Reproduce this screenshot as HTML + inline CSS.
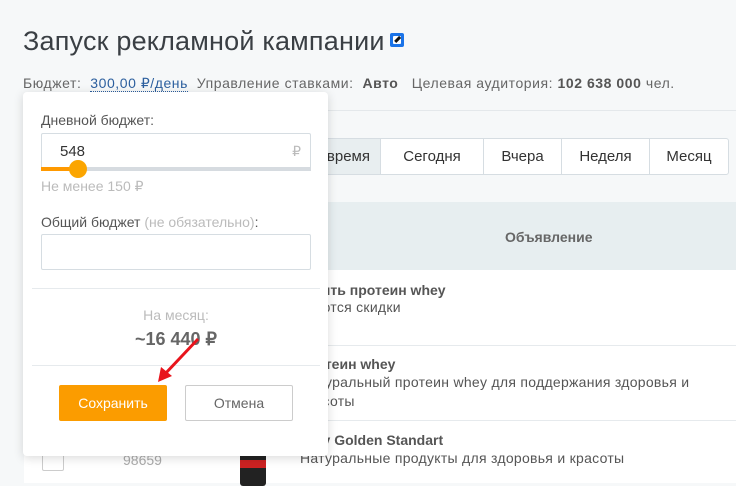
<!DOCTYPE html>
<html><head><meta charset="utf-8"><style>
*{box-sizing:border-box;margin:0;padding:0}
body{width:736px;height:483px;overflow:hidden;background:#f6f8f9;font-family:"Liberation Sans",sans-serif;color:#555;position:relative}
.a{position:absolute}
h1{position:absolute;left:23px;top:26px;font-size:27px;font-weight:normal;color:#3a3f44;letter-spacing:0.2px}
.meta{position:absolute;left:23px;top:75px;font-size:14px;color:#666;white-space:nowrap;letter-spacing:0.55px}
.meta b{color:#555}
.link{color:#2c5f9e;border-bottom:1px dotted #2c5f9e}
.tab{position:absolute;top:138px;height:37px;border:1px solid #d6dde2;background:#fff;font-size:15px;color:#333;text-align:center;line-height:36px}
.row{position:absolute;left:24px;width:712px;background:#fff;border-top:1px solid #e6eaed}
.t1{position:absolute;left:276px;font-size:14px;font-weight:bold;color:#555;white-space:nowrap}
.t2{position:absolute;left:276px;font-size:14px;color:#555;line-height:19px;letter-spacing:0.28px;white-space:nowrap}
.pop{position:absolute;left:23px;top:92px;width:305px;height:364px;background:#fff;border-radius:4px;box-shadow:0 2px 10px rgba(0,0,0,.15)}
.lbl{position:absolute;left:18px;font-size:14px;color:#555}
.inp{position:absolute;left:18px;width:270px;height:36px;border:1px solid #d6dde2;border-radius:2px;background:#fff}
</style></head><body>
<h1>Запуск рекламной кампании</h1>
<div class="a" style="left:390px;top:33px;width:14px;height:14px;background:#1a73e8;border-radius:2px"><div class="a" style="left:3px;top:3px;width:8px;height:8px;background:#fff;border-radius:1px"></div><div class="a" style="left:4px;top:5px;width:7px;height:2.5px;background:#111;transform:rotate(-45deg)"></div></div>
<div class="meta">Бюджет:&nbsp; <span class="link">300,00 ₽/день</span> &nbsp;Управление ставками:&nbsp; <b>Авто</b> &nbsp;&nbsp;Целевая аудитория: <b>102 638 000</b> чел.</div>
<div class="a" style="left:23px;top:110px;width:713px;height:1px;background:#e4e8eb"></div>
<div class="tab" style="left:300px;width:81px;background:#e8eef0;text-align:right;padding-right:10px">время</div>
<div class="tab" style="left:380px;width:104px">Сегодня</div>
<div class="tab" style="left:483px;width:79px">Вчера</div>
<div class="tab" style="left:561px;width:89px">Неделя</div>
<div class="tab" style="left:649px;width:80px;border-radius:0 3px 3px 0">Месяц</div>
<div class="a" style="left:24px;top:202px;width:712px;height:68px;background:#e7eef0"></div>
<div class="a" style="left:505px;top:229px;font-size:14px;font-weight:bold;color:#666">Объявление</div>
<div class="row" style="top:270px;height:75px;border-top:none"><div class="t1" style="top:12px;left:273px">Купить протеин whey</div><div class="t2" style="top:28px;left:278px">Даются скидки</div></div>
<div class="row" style="top:345px;height:75px"><div class="t1" style="top:10px;left:274px">Протеин whey</div><div class="t2" style="top:27px">Натуральный протеин whey для поддержания здоровья и<br>красоты</div></div>
<div class="row" style="top:420px;height:63px"><div class="t1" style="top:11px;left:269px">Whey Golden Standart</div><div class="t2" style="top:28px">Натуральные продукты для здоровья и красоты</div>
<div class="a" style="left:18px;top:28px;width:22px;height:22px;border:1px solid #ccc;border-radius:2px"></div>
<div class="a" style="left:99px;top:31px;font-size:14px;color:#aaa">98659</div>
<div class="a" style="left:216px;top:25px;width:26px;height:40px;background:linear-gradient(#222 0 35%,#c22 35% 55%,#222 55%);border-radius:3px"></div></div>
<div class="pop">
<div class="lbl" style="top:20px">Дневной бюджет:</div>
<div class="inp" style="top:41px"><span class="a" style="left:18px;top:9px;font-size:15px;color:#333">548</span><span class="a" style="right:9px;top:9px;font-size:14px;color:#bbb">₽</span></div>
<div class="a" style="left:18px;top:75px;width:270px;height:4px;background:#d6dbe0"></div>
<div class="a" style="left:18px;top:75px;width:38px;height:4px;background:#f90"></div>
<div class="a" style="left:46px;top:68px;width:18px;height:18px;border-radius:50%;background:#fba500"></div>
<div class="lbl" style="top:86px;color:#bbb">Не менее 150 ₽</div>
<div class="lbl" style="top:122px">Общий бюджет <span style="color:#bbb">(не обязательно)</span>:</div>
<div class="inp" style="top:142px"></div>
<div class="a" style="left:9px;top:196px;width:288px;height:1px;background:#e6eaed"></div>
<div class="a" style="left:0;width:306px;top:215px;text-align:center;font-size:14px;color:#bbb">На месяц:</div>
<div class="a" style="left:0;width:306px;top:237px;text-align:center;font-size:18px;font-weight:bold;color:#666">~16 440 ₽</div>
<div class="a" style="left:9px;top:273px;width:288px;height:1px;background:#e6eaed"></div>
<div class="a" style="left:36px;top:293px;width:108px;height:36px;background:#fb9c00;border-radius:2px;color:#fff;font-size:14px;text-align:center;line-height:36px">Сохранить</div>
<div class="a" style="left:162px;top:293px;width:108px;height:36px;border:1px solid #ccc;border-radius:2px;color:#666;font-size:14px;text-align:center;line-height:34px">Отмена</div>
</div>
<svg class="a" style="left:150px;top:335px" width="60" height="50"><line x1="48" y1="4" x2="14" y2="40" stroke="#e8141c" stroke-width="3"/><polygon points="8,47 11,32 22,41" fill="#e8141c"/></svg>
</body></html>
